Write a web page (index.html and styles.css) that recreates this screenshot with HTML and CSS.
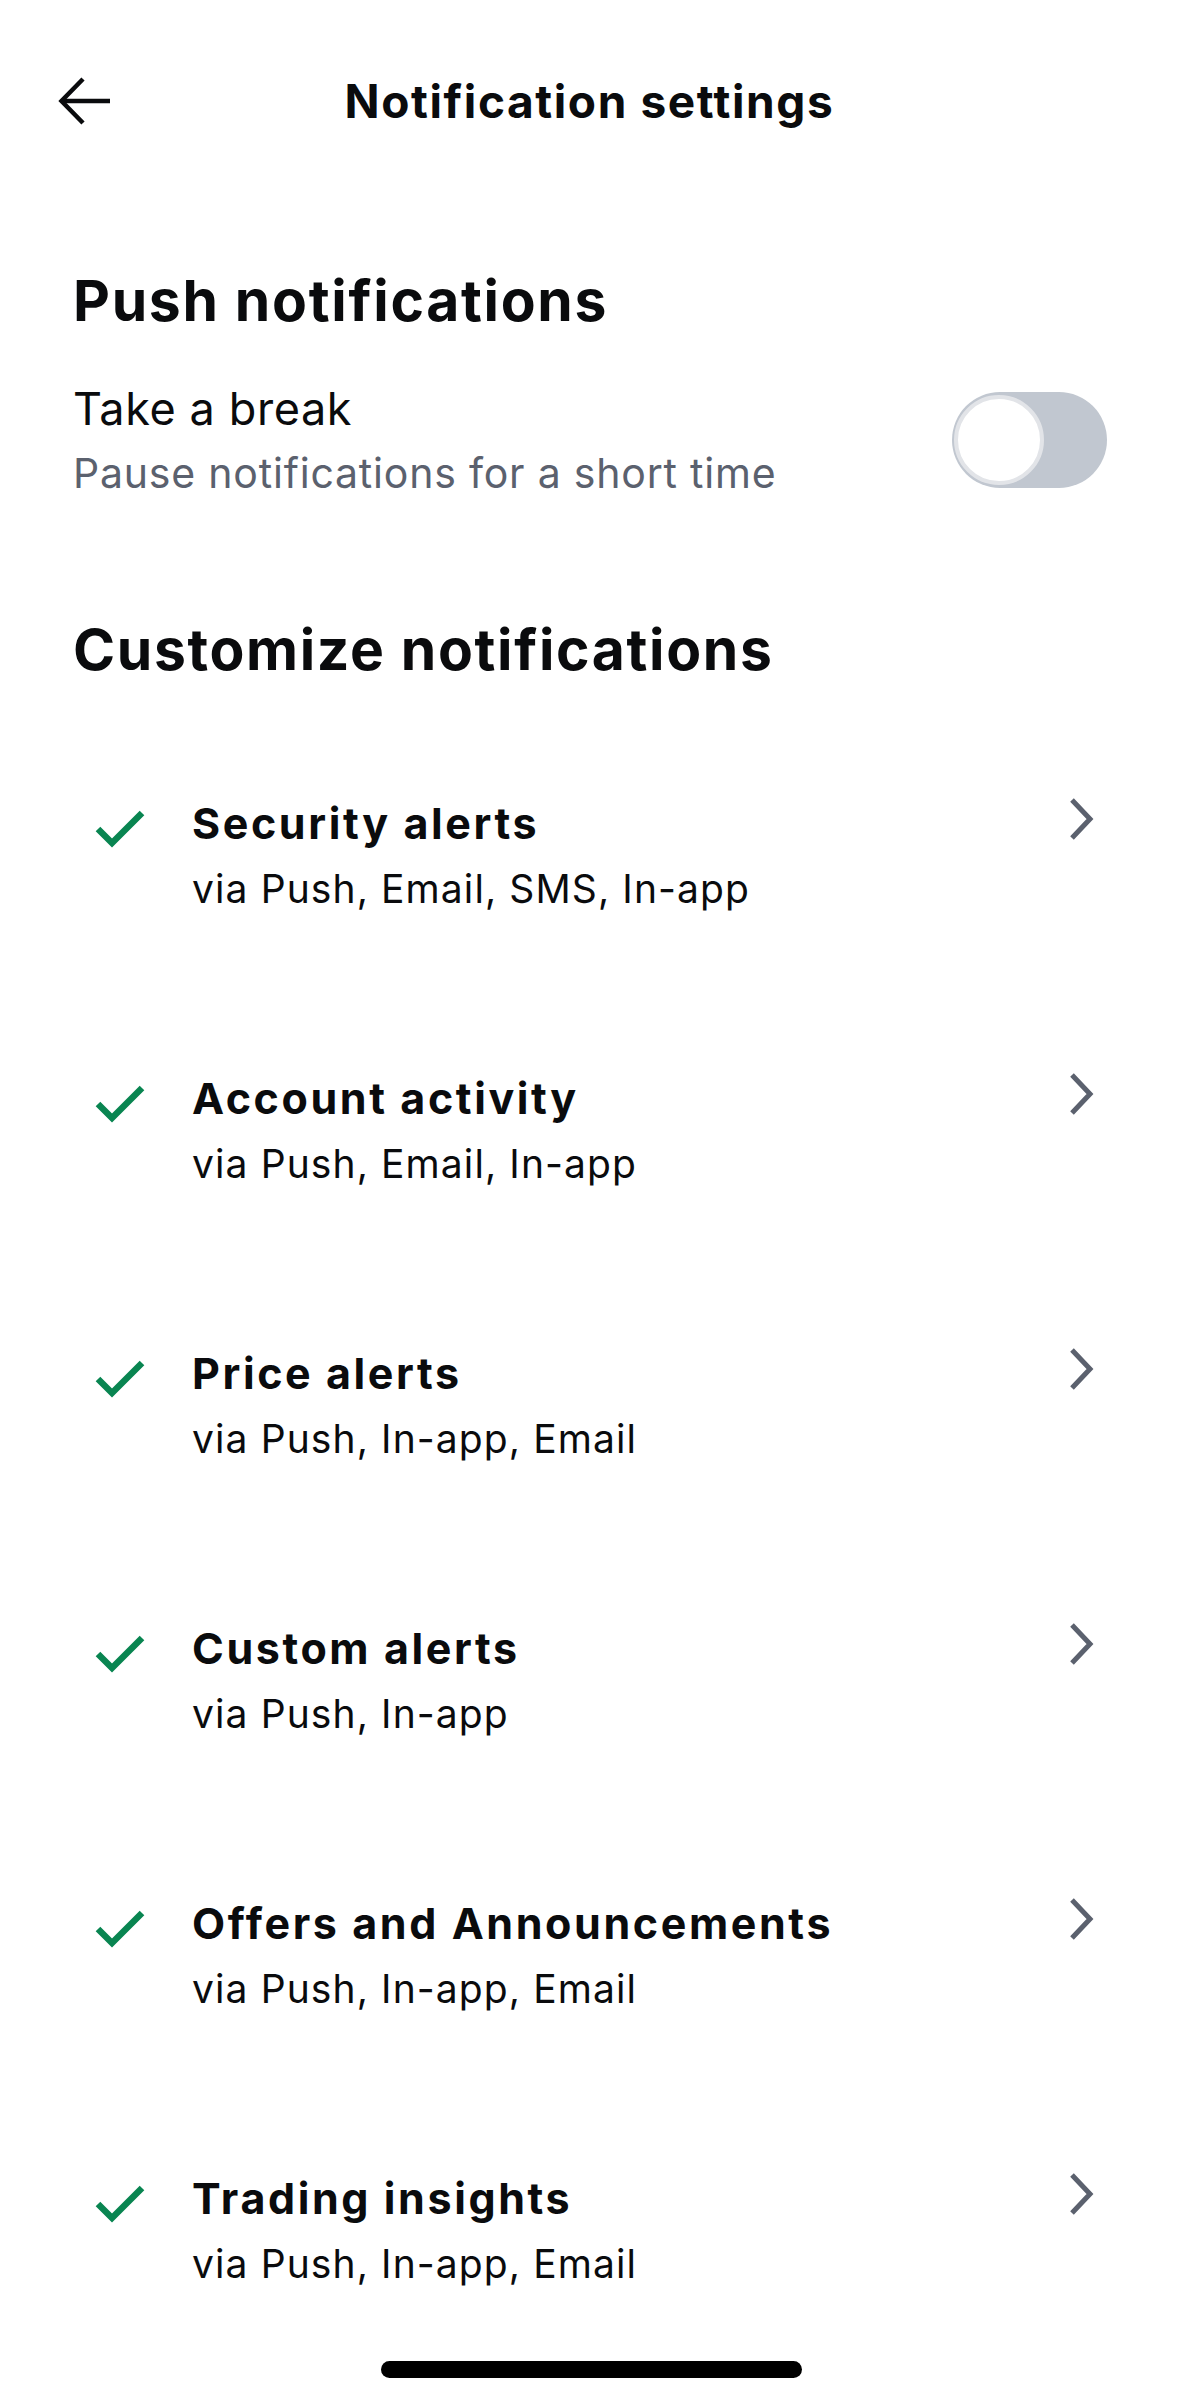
FILE: index.html
```html
<!DOCTYPE html>
<html lang="en">
<head>
    <meta charset="UTF-8">
    <meta name="viewport" content="width=device-width, initial-scale=1.0">
    <title>Notification settings</title>
    <link rel="stylesheet" href="styles.css">
</head>
<body>
    <div class="screen">
        <header class="topbar">
            <button class="back-btn" aria-label="Back">
                <svg width="54" height="48" viewBox="0 0 54 48" fill="none" stroke="#0a0b0d" stroke-width="4.5">
                    <path d="M52 24H4"/>
                    <path d="M25 2L3.5 24L25 46"/>
                </svg>
            </button>
            <h1>Notification settings</h1>
            <span></span>
        </header>

        <section class="section">
            <h2 class="section-title">Push notifications</h2>

            <div class="setting-row">
                <div class="setting-text">
                    <p class="setting-label">Take a break</p>
                    <p class="setting-hint">Pause notifications for a short time</p>
                </div>
                <div class="toggle">
                    <span class="toggle-knob"></span>
                </div>
            </div>
        </section>

        <section class="section">
            <h2 class="section-title section-title--custom">Customize notifications</h2>

            <ul class="alert-list">
                <li class="alert-item">
                    <svg class="check" width="50" height="40" viewBox="0 0 50 40" fill="none" stroke="#098551" stroke-width="6.5"><path d="M3 19L17 33L47 3"/></svg>
                    <div class="alert-text">
                        <p class="alert-title">Security alerts</p>
                        <p class="alert-sub">via Push, Email, SMS, In-app</p>
                    </div>
                    <svg class="chevron" width="28" height="44" viewBox="0 0 28 44" fill="none" stroke="#5b616e" stroke-width="5"><path d="M4 3L22 22L4 41"/></svg>
                </li>
                <li class="alert-item">
                    <svg class="check" width="50" height="40" viewBox="0 0 50 40" fill="none" stroke="#098551" stroke-width="6.5"><path d="M3 19L17 33L47 3"/></svg>
                    <div class="alert-text">
                        <p class="alert-title">Account activity</p>
                        <p class="alert-sub">via Push, Email, In-app</p>
                    </div>
                    <svg class="chevron" width="28" height="44" viewBox="0 0 28 44" fill="none" stroke="#5b616e" stroke-width="5"><path d="M4 3L22 22L4 41"/></svg>
                </li>
                <li class="alert-item">
                    <svg class="check" width="50" height="40" viewBox="0 0 50 40" fill="none" stroke="#098551" stroke-width="6.5"><path d="M3 19L17 33L47 3"/></svg>
                    <div class="alert-text">
                        <p class="alert-title">Price alerts</p>
                        <p class="alert-sub">via Push, In-app, Email</p>
                    </div>
                    <svg class="chevron" width="28" height="44" viewBox="0 0 28 44" fill="none" stroke="#5b616e" stroke-width="5"><path d="M4 3L22 22L4 41"/></svg>
                </li>
                <li class="alert-item">
                    <svg class="check" width="50" height="40" viewBox="0 0 50 40" fill="none" stroke="#098551" stroke-width="6.5"><path d="M3 19L17 33L47 3"/></svg>
                    <div class="alert-text">
                        <p class="alert-title">Custom alerts</p>
                        <p class="alert-sub">via Push, In-app</p>
                    </div>
                    <svg class="chevron" width="28" height="44" viewBox="0 0 28 44" fill="none" stroke="#5b616e" stroke-width="5"><path d="M4 3L22 22L4 41"/></svg>
                </li>
                <li class="alert-item">
                    <svg class="check" width="50" height="40" viewBox="0 0 50 40" fill="none" stroke="#098551" stroke-width="6.5"><path d="M3 19L17 33L47 3"/></svg>
                    <div class="alert-text">
                        <p class="alert-title">Offers and Announcements</p>
                        <p class="alert-sub">via Push, In-app, Email</p>
                    </div>
                    <svg class="chevron" width="28" height="44" viewBox="0 0 28 44" fill="none" stroke="#5b616e" stroke-width="5"><path d="M4 3L22 22L4 41"/></svg>
                </li>
                <li class="alert-item">
                    <svg class="check" width="50" height="40" viewBox="0 0 50 40" fill="none" stroke="#098551" stroke-width="6.5"><path d="M3 19L17 33L47 3"/></svg>
                    <div class="alert-text">
                        <p class="alert-title">Trading insights</p>
                        <p class="alert-sub">via Push, In-app, Email</p>
                    </div>
                    <svg class="chevron" width="28" height="44" viewBox="0 0 28 44" fill="none" stroke="#5b616e" stroke-width="5"><path d="M4 3L22 22L4 41"/></svg>
                </li>
            </ul>
        </section>

        <!-- system home bar -->
        <div class="home-indicator"></div>
    </div>
</body>
</html>
```

FILE: styles.css
```css
* {
    box-sizing: border-box;
}

body {
    margin: 0;
    padding: 0;
    background-color: #fff;
    color: #0a0b0d;
    font-family: Inter, "Noto Sans", sans-serif;
}

p, h1, h2, ul {
    margin: 0;
    padding: 0;
}

.screen {
    width: 1179px;
    min-height: 2396px;
}

/* top bar */
.topbar {
    height: 202px;
    padding: 0 58px;
    display: grid;
    grid-template-columns: 1fr auto 1fr;
    align-items: center;
}

.back-btn {
    width: 54px;
    height: 48px;
    padding: 0;
    border: none;
    background: none;
    display: flex;
}

.topbar h1 {
    font-size: 46px;
    line-height: 55px;
    font-weight: 700;
    letter-spacing: 1.6px;
}

/* sections */
.section {
    padding: 0 73px;
}

.section-title {
    margin-top: 65px;
    font-size: 57px;
    line-height: 68px;
    font-weight: 700;
    letter-spacing: 1.7px;
}

.section-title--custom {
    margin-top: 117px;
    letter-spacing: 1.65px;
}

.setting-row {
    margin-top: 46px;
    display: flex;
    align-items: center;
    justify-content: space-between;
}

.setting-label {
    font-size: 45px;
    line-height: 56px;
    letter-spacing: 0.6px;
}

.setting-hint {
    margin-top: 10px;
    font-size: 41px;
    line-height: 52px;
    letter-spacing: 0.8px;
    color: #5b616e;
}

.toggle {
    width: 155px;
    height: 96px;
    margin-right: -1px;
    border-radius: 48px;
    background-color: #c1c7d0;
    padding: 3px 2px;
}

.toggle-knob {
    display: block;
    width: 90px;
    height: 90px;
    border-radius: 50%;
    background-color: #fff;
    border: 4px solid #e2e4e8;
}

/* alert list */
.alert-list {
    list-style: none;
    margin-top: 113px;
    padding-left: 22px;
    display: flex;
    flex-direction: column;
    gap: 158px;
}

.alert-item {
    display: flex;
    align-items: flex-start;
}

.check {
    flex: none;
    margin-top: 13px;
}

.alert-text {
    flex: 1;
    margin-left: 47px;
}

.alert-title {
    font-size: 43px;
    line-height: 52px;
    font-weight: 700;
    letter-spacing: 2.6px;
}

.alert-sub {
    margin-top: 15px;
    font-size: 39px;
    line-height: 50px;
    letter-spacing: 1.1px;
}

.chevron {
    flex: none;
    margin-right: 10px;
}

.home-indicator {
    position: fixed;
    left: 381px;
    bottom: 18px;
    width: 421px;
    height: 17px;
    border-radius: 9px;
    background-color: #000;
}
```
